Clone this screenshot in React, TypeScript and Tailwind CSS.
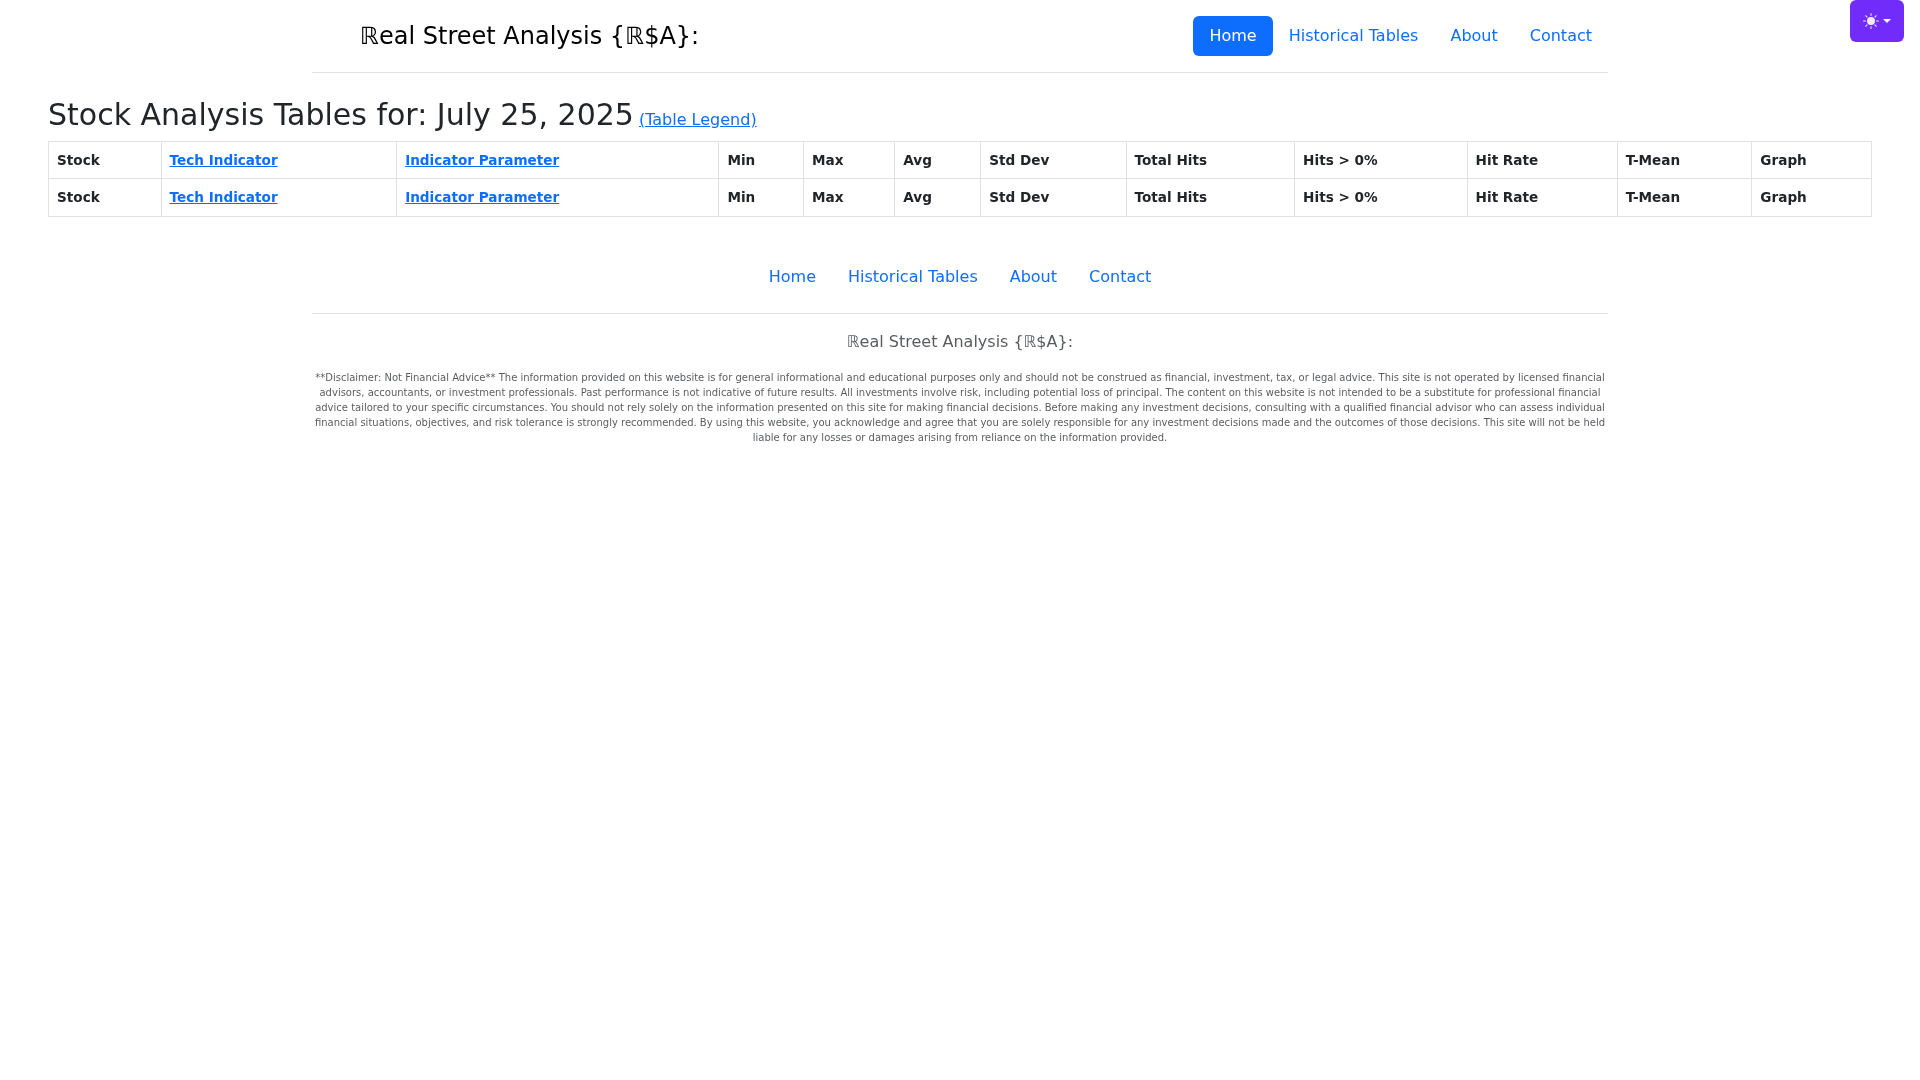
const NAV = ["Home", "Historical Tables", "About", "Contact"];
const COLS = ["Stock", "Tech Indicator", "Indicator Parameter", "Min", "Max", "Avg", "Std Dev", "Total Hits", "Hits > 0%", "Hit Rate", "T-Mean", "Graph"];

function Row() {
  return (
    <tr>
      {COLS.map((c, i) => (
        <th key={c} className="border border-[#dee2e6] p-2 text-left font-bold text-[#212529]">
          {i === 1 || i === 2 ? (
            <a href="#" className="text-[#0d6efd] underline">{c}</a>
          ) : (
            c
          )}
        </th>
      ))}
    </tr>
  );
}

export default function App() {
  return (
    <div className="relative min-h-[1080px] bg-white font-['DejaVu_Sans',sans-serif] text-base leading-6 text-[#212529] [will-change:transform]">
      <div className="absolute top-0 right-4 flex h-[42px] w-[54px] items-center gap-1 rounded-md bg-[#712cf9] pl-[13px]">
        <svg width="16" height="16" viewBox="0 0 16 16" fill="#ffffff" className="opacity-90">
          <path d="M8 12a4 4 0 1 0 0-8 4 4 0 0 0 0 8zM8 0a.5.5 0 0 1 .5.5v2a.5.5 0 0 1-1 0v-2A.5.5 0 0 1 8 0zm0 13a.5.5 0 0 1 .5.5v2a.5.5 0 0 1-1 0v-2A.5.5 0 0 1 8 13zm8-5a.5.5 0 0 1-.5.5h-2a.5.5 0 0 1 0-1h2a.5.5 0 0 1 .5.5zM3 8a.5.5 0 0 1-.5.5h-2a.5.5 0 0 1 0-1h2A.5.5 0 0 1 3 8zm10.657-5.657a.5.5 0 0 1 0 .707l-1.414 1.415a.5.5 0 1 1-.707-.708l1.414-1.414a.5.5 0 0 1 .707 0zm-9.193 9.193a.5.5 0 0 1 0 .707L3.05 13.657a.5.5 0 0 1-.707-.707l1.414-1.414a.5.5 0 0 1 .707 0zm9.193 2.121a.5.5 0 0 1-.707 0l-1.414-1.414a.5.5 0 0 1 .707-.707l1.414 1.414a.5.5 0 0 1 0 .707zM4.464 4.465a.5.5 0 0 1-.707 0L2.343 3.05a.5.5 0 1 1 .707-.707l1.414 1.414a.5.5 0 0 1 0 .708z" />
        </svg>
        <span className="h-0 w-0 border-x-[4.8px] border-t-[4.8px] border-x-transparent border-t-white" />
      </div>

      <header className="mx-auto mb-6 flex w-[1296px] items-center justify-between border-b border-[#dee2e6] py-4">
        <a href="#" className="ml-12 text-2xl leading-9 text-black">ℝeal Street Analysis {"{"}ℝ$A{"}"}:</a>
        <nav className="flex">
          {NAV.map((n, i) => (
            <a key={n} href="#" className={i === 0 ? "rounded-md bg-[#0d6efd] px-4 py-2 text-white" : "px-4 py-2 text-[#0d6efd]"}>{n}</a>
          ))}
        </nav>
      </header>

      <main className="px-12">
        <h2 className="mb-2 text-[30px] leading-[1.2] font-medium">
          Stock Analysis Tables for: July 25, 2025
          <a href="#" className="ml-[5px] text-base font-normal text-[#0d6efd] underline">(Table Legend)</a>
        </h2>
        <table className="w-full border-collapse text-[13.6px] leading-[1.5]">
          <tbody>
            <Row />
            <Row />
          </tbody>
        </table>
      </main>

      <footer className="mx-auto my-6 w-[1296px] py-4">
        <nav className="mb-4 flex justify-center border-b border-[#dee2e6] pb-4">
          {NAV.map((n) => (
            <a key={n} href="#" className="px-4 py-2 text-[#0d6efd]">{n}</a>
          ))}
        </nav>
        <p className="mb-4 text-center text-[rgba(33,37,41,0.75)]">ℝeal Street Analysis {"{"}ℝ$A{"}"}:</p>
        <p className="text-center text-[10px] leading-[15px] text-[rgba(33,37,41,0.75)]">
          **Disclaimer: Not Financial Advice** The information provided on this website is for general informational and educational purposes only and should not be construed as financial, investment, tax, or legal advice. This site is not operated by licensed financial advisors, accountants, or investment professionals. Past performance is not indicative of future results. All investments involve risk, including potential loss of principal. The content on this website is not intended to be a substitute for professional financial advice tailored to your specific circumstances. You should not rely solely on the information presented on this site for making financial decisions. Before making any investment decisions, consulting with a qualified financial advisor who can assess individual financial situations, objectives, and risk tolerance is strongly recommended. By using this website, you acknowledge and agree that you are solely responsible for any investment decisions made and the outcomes of those decisions. This site will not be held liable for any losses or damages arising from reliance on the information provided.
        </p>
      </footer>
    </div>
  );
}
